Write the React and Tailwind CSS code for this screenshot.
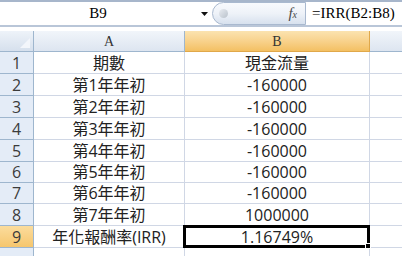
import React from "react";

const rows = [
  ["1", "期數", "現金流量", 22],
  ["2", "第1年年初", "-160000", 22],
  ["3", "第2年年初", "-160000", 22],
  ["4", "第3年年初", "-160000", 22],
  ["5", "第4年年初", "-160000", 22],
  ["6", "第5年年初", "-160000", 21],
  ["7", "第6年年初", "-160000", 21],
  ["8", "第7年年初", "1000000", 22],
  ["9", "年化報酬率(IRR)", "1.16749%", 22],
];

function Row({ n, a, b, h, sel }) {
  const hc = h === 21 ? "h-[21px]" : "h-[22px]";
  return (
    <div className={`flex ${hc}`}>
      <div
        className={`w-[34px] shrink-0 flex items-center justify-center border-r border-b border-[#9eb6ce] text-[16px] text-[#3b3b3b] ${
          sel ? "bg-gradient-to-b from-[#fbdc9c] to-[#f6c66d]" : "bg-[#e4ecf7]"
        }`}
      >
        {n}
      </div>
      <div className="w-[151px] shrink-0 flex items-center justify-center border-r border-b border-[#d0d7e5] text-[16px] text-[#222]">
        {a}
      </div>
      <div className="relative w-[185px] shrink-0 flex items-center justify-center border-r border-b border-[#d0d7e5] text-[16px] text-[#222]">
        {b}
        {sel && (
          <div className="absolute -left-[2px] -top-[1px] -right-[1px] -bottom-[1px] border-[3px] border-black">
            <div className="absolute -right-[4px] -bottom-[4px] w-[6px] h-[6px] bg-black border border-white" />
          </div>
        )}
      </div>
      <div className="flex-1 border-b border-[#d0d7e5]" />
    </div>
  );
}

export default function App() {
  return (
    <div className="w-[402px] h-[256px] overflow-hidden bg-white font-['Open_Sans','Noto_Sans_CJK_TC',sans-serif]">
      <div className="h-[2px] bg-[#a7b6cb]" />
      <div className="flex h-[23px] bg-white">
        <div className="w-[196px] flex items-center justify-center font-['Liberation_Serif'] text-[15px] text-black">
          B9
        </div>
        <div className="w-[16px] flex items-center justify-center">
          <svg width="7" height="4" viewBox="0 0 7 4">
            <path d="M0 0H7L3.5 4Z" fill="#111" />
          </svg>
        </div>
        <div className="relative w-[94px] rounded-l-full border border-[#a9b9cf] bg-gradient-to-b from-[#f8fafd] via-[#eef2f8] to-[#d7e1ee] flex items-center justify-end pr-[8px]">
          <div className="absolute left-[6px] top-[6px] w-[9px] h-[9px] rounded-full bg-gradient-to-br from-[#e9edf2] to-[#b9c1cb]" />
          <span className="font-['Liberation_Serif'] italic text-[15px] text-[#4a4a4a] leading-none">
            f<span className="text-[10px]">x</span>
          </span>
        </div>
        <div className="flex-1 flex items-center pl-[6px] font-['Liberation_Serif'] text-[15px] text-black">
          =IRR(B2:B8)
        </div>
      </div>
      <div className="h-[2px] bg-[#b9c6d8]" />
      <div className="h-[4px] bg-white" />
      <div className="flex h-[21px]">
        <div className="relative w-[34px] shrink-0 border-r border-b border-[#9eb6ce] bg-gradient-to-b from-[#eef3f9] to-[#d6e0ed]">
          <svg className="absolute right-[3px] bottom-[3px]" width="10" height="10" viewBox="0 0 10 10">
            <path d="M10 0V10H0Z" fill="#f3f6fb" />
          </svg>
        </div>
        <div className="w-[151px] shrink-0 flex items-center justify-center border-r border-b border-[#9eb6ce] bg-gradient-to-b from-[#f1f5fa] to-[#dde5f0] font-['Liberation_Serif'] text-[14px] text-[#333]">
          A
        </div>
        <div className="w-[185px] shrink-0 flex items-center justify-center border-r border-b border-[#e0a84a] bg-gradient-to-b from-[#fbe3b0] via-[#f8d28c] to-[#f3c062] font-['Liberation_Serif'] text-[14px] text-[#333]">
          B
        </div>
        <div className="flex-1 border-b border-[#9eb6ce] bg-gradient-to-b from-[#f1f5fa] to-[#dde5f0]" />
      </div>
      {rows.map(([n, a, b, h]) => (
        <Row key={n} n={n} a={a} b={b} h={h} sel={n === "9"} />
      ))}
      <div className="flex h-[22px]">
        <div className="w-[34px] shrink-0 border-r border-[#9eb6ce] bg-[#e4ecf7]" />
        <div className="w-[151px] shrink-0 border-r border-[#d0d7e5]" />
        <div className="w-[185px] shrink-0 border-r border-[#d0d7e5]" />
        <div className="flex-1" />
      </div>
    </div>
  );
}
